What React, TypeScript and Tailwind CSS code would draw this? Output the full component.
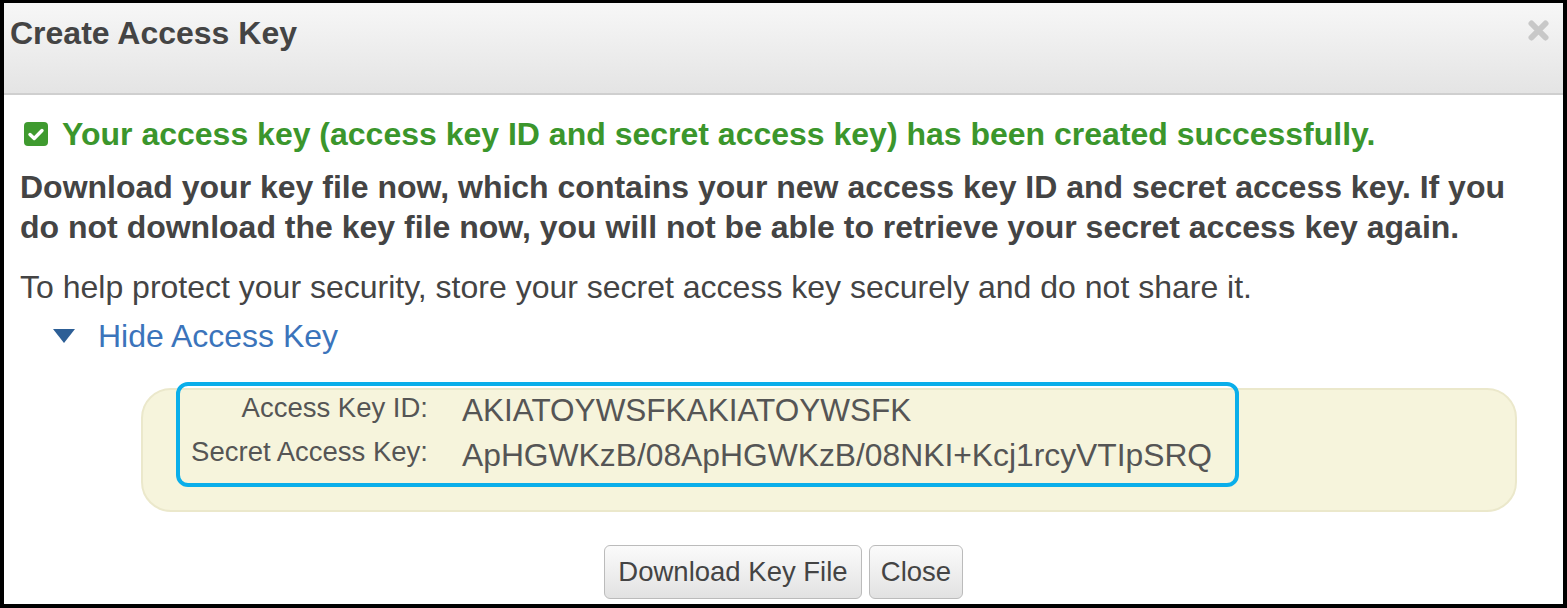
import React from "react";

export default function App() {
  const font = { fontFamily: '"Liberation Sans", Arial, Helvetica, sans-serif' };
  return (
    <div className="w-[1567px] h-[608px] bg-black pt-[3px] pl-[4px] pr-[4px] pb-[4px]" style={font}>
      <div className="w-full h-full bg-white flex flex-col overflow-hidden">
        {/* Header */}
        <div className="h-[92px] shrink-0 bg-gradient-to-b from-[#f7f7f7] to-[#e4e4e4] border-b-2 border-[#cfcfcf] flex items-start justify-between pl-[6px] pr-[13px]">
          <h1 className="text-[32px] font-bold text-[#444] mt-[10px] leading-[40px]">Create Access Key</h1>
          <svg className="mt-[17px]" width="23" height="21" viewBox="0 0 23 21">
            <path d="M4.5 3.5 L18.5 17.5 M18.5 3.5 L4.5 17.5" stroke="#c8c8c8" strokeWidth="6" strokeLinecap="round" />
          </svg>
        </div>
        {/* Body */}
        <div className="flex flex-col pl-[16px] pr-[16px]">
          <div className="flex items-center mt-[19px] h-[40px]">
            <svg className="ml-[4px] mr-[14px]" width="24" height="24" viewBox="0 0 24 24">
              <rect x="0" y="0" width="24" height="24" rx="4" fill="#3f9a2f" />
              <path d="M6 12.5 L10.2 16.5 L18 8.5" stroke="#fff" strokeWidth="3.4" fill="none" strokeLinecap="round" strokeLinejoin="round" />
            </svg>
            <span className="text-[32px] font-bold text-[#3b962c] leading-[40px] whitespace-nowrap">
              Your access key (access key ID and secret access key) has been created successfully.
            </span>
          </div>
          <p className="text-[32px] font-bold text-[#444] leading-[40px] mt-[13px] whitespace-nowrap">
            Download your key file now, which contains your new access key ID and secret access key. If you
            <br />
            do not download the key file now, you will not be able to retrieve your secret access key again.
          </p>
          <p className="text-[32px] text-[#444] leading-[40px] mt-[20px] whitespace-nowrap">
            To help protect your security, store your secret access key securely and do not share it.
          </p>
          <div className="flex items-center mt-[9px] h-[40px]">
            <svg className="ml-[32px] mr-[22px]" width="24" height="16" viewBox="0 0 24 16">
              <path d="M1 1 L23 1 L12 15 Z" fill="#2d5f96" />
            </svg>
            <span className="text-[32px] text-[#3b74bb] leading-[40px] whitespace-nowrap">Hide Access Key</span>
          </div>
          {/* Key box */}
          <div className="ml-[121px] mr-[30px] mt-[32px] h-[124px] rounded-[30px] bg-[#f6f4dc] border-2 border-[#ebe8cb]">
            <div className="ml-[33px] mt-[-8px] w-[1063px] h-[105px] rounded-[12px] border-[4px] border-[#0aaeea] flex flex-col">
              <div className="flex items-center h-[44px]">
                <span className="w-[248px] text-right text-[27.5px] text-[#555] leading-[32px] whitespace-nowrap">Access Key ID:</span>
                <span className="ml-[34px] text-[31.5px] text-[#555] leading-[36px] mt-[4px] whitespace-nowrap">AKIATOYWSFKAKIATOYWSFK</span>
              </div>
              <div className="flex items-center h-[44px]">
                <span className="w-[248px] text-right text-[27.5px] text-[#555] leading-[32px] whitespace-nowrap">Secret Access Key:</span>
                <span className="ml-[34px] text-[31.8px] text-[#555] leading-[36px] mt-[6px] whitespace-nowrap">ApHGWKzB/08ApHGWKzB/08NKI+Kcj1rcyVTIpSRQ</span>
              </div>
            </div>
          </div>
          {/* Buttons */}
          <div className="flex justify-center gap-[7px] mt-[33px]">
            <button className="h-[54px] w-[258px] rounded-[6px] border border-[#bbb] bg-gradient-to-b from-[#fbfbfb] to-[#e2e2e2] text-[27.5px] text-[#444] whitespace-nowrap">
              Download Key File
            </button>
            <button className="h-[54px] w-[94px] rounded-[6px] border border-[#bbb] bg-gradient-to-b from-[#fbfbfb] to-[#e2e2e2] text-[27.5px] text-[#444] whitespace-nowrap">
              Close
            </button>
          </div>
        </div>
      </div>
    </div>
  );
}
